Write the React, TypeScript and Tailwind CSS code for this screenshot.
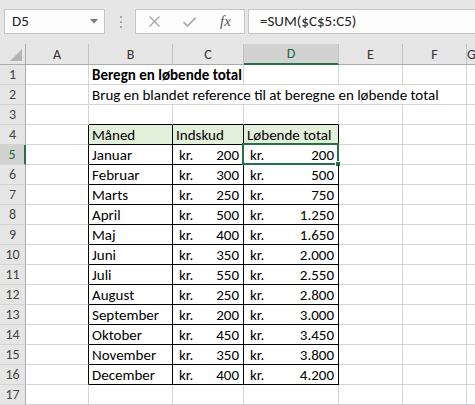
import React from 'react';

const rows: [string, number, string][] = [
  ['Januar', 200, '200'],
  ['Februar', 300, '500'],
  ['Marts', 250, '750'],
  ['April', 500, '1.250'],
  ['Maj', 400, '1.650'],
  ['Juni', 350, '2.000'],
  ['Juli', 550, '2.550'],
  ['August', 250, '2.800'],
  ['September', 200, '3.000'],
  ['Oktober', 450, '3.450'],
  ['November', 350, '3.800'],
  ['December', 400, '4.200'],
];

const font = { fontFamily: 'Carlito, Lato, "Liberation Sans", sans-serif' };

function Cell({
  children,
  right = '#d4d4d4',
  bottom = '#d4d4d4',
  fill = '',
  span = '',
  className = '',
}: {
  children?: React.ReactNode;
  right?: string;
  bottom?: string;
  fill?: string;
  span?: string;
  className?: string;
}) {
  return (
    <div
      className={`h-[20px] border-r border-b flex items-end leading-[18px] text-[15px] text-black whitespace-nowrap ${span} ${fill} ${className}`}
      style={{ borderRightColor: right, borderBottomColor: bottom }}
    >
      {children}
    </div>
  );
}

function RowHead({ n, active = false }: { n: number; active?: boolean }) {
  return (
    <div
      className={`h-[20px] flex items-center justify-center text-[14px] border-b border-[#d4d4d4] ${
        active ? 'bg-[#d2d2d2] text-[#1e6b3e] border-r-2 border-r-[#217346]' : 'bg-[#e6e6e6] text-[#444] border-r border-r-[#ababab]'
      }`}
    >
      {n}
    </div>
  );
}

export default function App() {
  const colHeads = ['A', 'B', 'C', 'D', 'E', 'F', 'G'];
  return (
    <div className="w-[475px] h-[405px] overflow-hidden bg-white" style={font}>
      {/* Formula bar */}
      <div className="h-[44px] bg-[#e6e6e6] flex items-start pt-[9px]">
        <div className="ml-[4px] w-[101px] h-[25px] border border-[#c6c6c6] bg-[#fdfdfd] flex items-center justify-between pl-[7px] pr-[6px] text-[15px] text-[#222]">
          <span>D5</span>
          <svg width="8" height="5" viewBox="0 0 8 5">
            <path d="M0 0 L8 0 L4 4.5 Z" fill="#7a7a7a" />
          </svg>
        </div>
        <div className="ml-[15px] mt-[7px] flex flex-col gap-[3px]">
          <div className="w-[2px] h-[2px] bg-[#a8a8a8]" />
          <div className="w-[2px] h-[2px] bg-[#a8a8a8]" />
          <div className="w-[2px] h-[2px] bg-[#a8a8a8]" />
        </div>
        <div className="ml-[13px] w-[110px] h-[25px] border border-[#c6c6c6] bg-[#fdfdfd] flex items-center">
          <svg className="ml-[13px]" width="11" height="11" viewBox="0 0 11 11">
            <path d="M0.5 0.5 L10.5 10.5 M10.5 0.5 L0.5 10.5" stroke="#a6a6a6" strokeWidth="1.3" />
          </svg>
          <svg className="ml-[23px]" width="13" height="10" viewBox="0 0 13 10">
            <path d="M0.5 5 L4.5 9 L12.5 0.8" stroke="#a6a6a6" strokeWidth="1.6" fill="none" />
          </svg>
          <span
            className="ml-[24px] italic text-[15px] text-[#555] leading-none"
            style={{ fontFamily: '"Liberation Serif", serif' }}
          >
            fx
          </span>
        </div>
        <div className="ml-[3px] flex-1 h-[25px] border border-r-0 border-[#c6c6c6] bg-[#fdfdfd] flex items-center pl-[11px] text-[15px] text-[#222]">
          =SUM($C$5:C5)
        </div>
      </div>

      {/* Grid */}
      <div className="grid grid-cols-[26px_63px_84px_71px_95px_64px_64px_1fr]">
        {/* column headers */}
        <div className="h-[21px] bg-[#e6e6e6] border-r border-b border-[#ababab] relative">
          <svg className="absolute left-[10px] top-[5px]" width="12" height="12" viewBox="0 0 12 12">
            <path d="M12 0 L12 12 L0 12 Z" fill="#b5b5b5" />
          </svg>
        </div>
        {colHeads.map((c) => (
          <div
            key={c}
            className={`h-[21px] flex items-center justify-center text-[14px] border-r border-r-[#c4c4c4] ${
              c === 'D'
                ? 'bg-[#d2d2d2] text-[#1e6b3e] border-b-2 border-b-[#217346]'
                : 'bg-[#e6e6e6] text-[#333] border-b border-b-[#ababab]'
            }`}
          >
            {c}
          </div>
        ))}

        {/* row 1 */}
        <RowHead n={1} />
        <Cell />
        <Cell span="col-span-2" className="pl-[3px] font-bold">
          Beregn en løbende total
        </Cell>
        <Cell />
        <Cell />
        <Cell />
        <Cell />

        {/* row 2 */}
        <RowHead n={2} />
        <Cell />
        <Cell span="col-span-5" className="pl-[3px]">
          Brug en blandet reference til at beregne en løbende total
        </Cell>
        <Cell />

        {/* row 3 */}
        <RowHead n={3} />
        <Cell />
        <Cell bottom="#000" />
        <Cell bottom="#000" />
        <Cell bottom="#000" />
        <Cell />
        <Cell />
        <Cell />

        {/* row 4 - table header */}
        <RowHead n={4} />
        <Cell right="#000" />
        <Cell right="#000" bottom="#000" fill="bg-[#e2efda]" className="pl-[3px]">
          Måned
        </Cell>
        <Cell right="#000" bottom="#000" fill="bg-[#e2efda]" className="pl-[3px]">
          Indskud
        </Cell>
        <Cell right="#000" bottom="#000" fill="bg-[#e2efda]" className="pl-[3px]">
          Løbende total
        </Cell>
        <Cell />
        <Cell />
        <Cell />

        {rows.map(([m, v, t], i) => (
          <React.Fragment key={m}>
            <RowHead n={i + 5} active={i === 0} />
            <Cell right="#000" />
            <Cell right="#000" bottom="#000" className="pl-[3px]">
              {m}
            </Cell>
            <Cell right="#000" bottom="#000" className="pl-[6px] pr-[4px] justify-between">
              <span>kr.</span>
              <span>{v}</span>
            </Cell>
            <Cell right="#000" bottom="#000" className="relative pl-[6px] pr-[4px] justify-between">
              <span>kr.</span>
              <span>{t}</span>
              {i === 0 && (
                <div className="absolute -left-[2px] -top-[2px] -right-[1px] -bottom-[1px] border-2 border-[#217346]">
                  <div className="absolute -right-[4px] -bottom-[4px] w-[6px] h-[6px] bg-[#217346] border border-white" />
                </div>
              )}
            </Cell>
            <Cell />
            <Cell />
            <Cell />
          </React.Fragment>
        ))}

        {/* row 17 */}
        <RowHead n={17} />
        <Cell />
        <Cell />
        <Cell />
        <Cell />
        <Cell />
        <Cell />
        <Cell />
      </div>
    </div>
  );
}
